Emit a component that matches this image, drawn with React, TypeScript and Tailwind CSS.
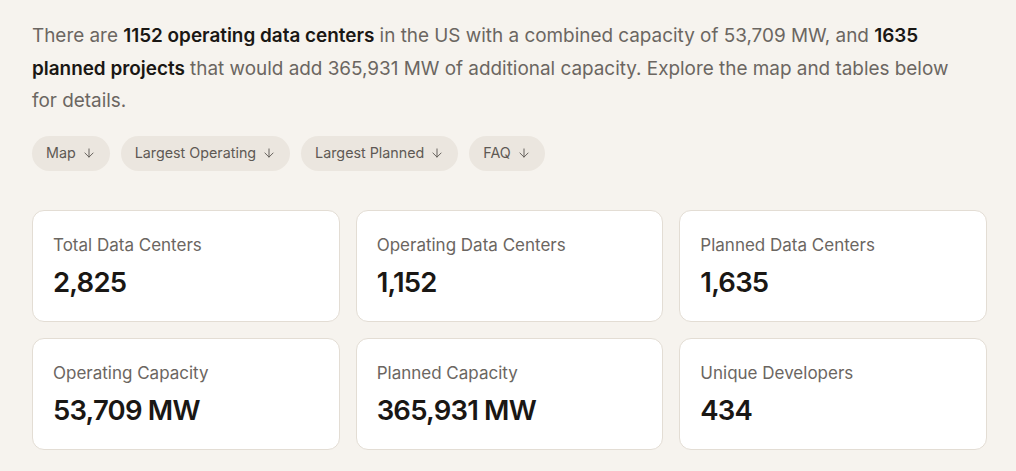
import { ArrowDown } from 'lucide-react'

const links = ['Map', 'Largest Operating', 'Largest Planned', 'FAQ']

const stats = [
  { label: 'Total Data Centers', value: '2,825' },
  { label: 'Operating Data Centers', value: '1,152' },
  { label: 'Planned Data Centers', value: '1,635' },
  { label: 'Operating Capacity', value: '53,709 MW' },
  { label: 'Planned Capacity', value: '365,931 MW' },
  { label: 'Unique Developers', value: '434' },
]

function StatCard({ label, value }: { label: string; value: string }) {
  return (
    <div className="flex h-[112px] flex-col rounded-xl border border-[#e3ddd4] bg-white px-5 pt-[22px]">
      <p className="text-[17px] leading-6 text-[#6b6661]">{label}</p>
      <p className="mt-[9px] text-[27.5px] font-semibold leading-8 tracking-[-0.8px] text-[#1a1714]">
        {value}
      </p>
    </div>
  )
}

export default function App() {
  return (
    <div className="min-h-[471px] bg-[#f6f3ee] px-8 pt-[20px] font-['Inter',sans-serif]">
      <p className="max-w-[940px] text-[18.9px] leading-[32.5px] text-[#6b6661]">
        There are <strong className="font-semibold text-[#1a1714]">1152 operating data centers</strong> in the US with a
        combined capacity of 53,709 MW, and{' '}
        <strong className="font-semibold text-[#1a1714]">1635 planned projects</strong> that would add 365,931 MW of
        additional capacity. Explore the map and tables below for details.
      </p>

      <div className="mt-[18px] flex gap-[11px]">
        {links.map((l) => (
          <a
            key={l}
            href="#"
            className="flex h-[35px] items-center gap-1.5 rounded-full bg-[#ebe6df] px-[14px] text-[14.3px] text-[#5e5954]"
          >
            {l}
            <ArrowDown size={14} strokeWidth={1.6} />
          </a>
        ))}
      </div>

      <div className="mt-[39px] grid w-[955px] grid-cols-3 gap-4">
        {stats.map((s) => (
          <StatCard key={s.label} {...s} />
        ))}
      </div>
    </div>
  )
}
